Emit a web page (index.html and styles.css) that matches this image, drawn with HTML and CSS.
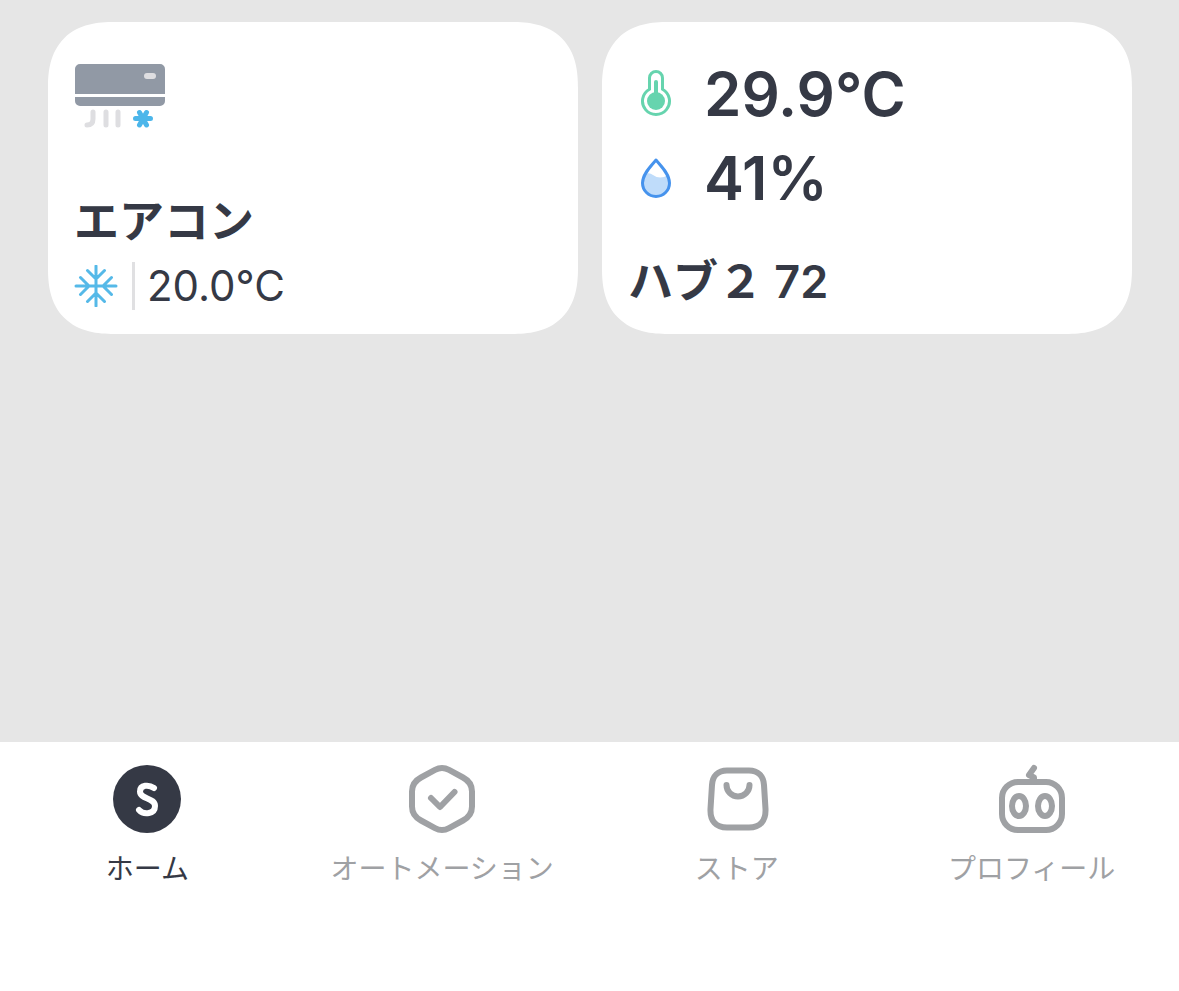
FILE: index.html
```html
<!DOCTYPE html>
<html lang="ja">
<head>
    <meta charset="UTF-8">
    <meta name="viewport" content="width=device-width, initial-scale=1">
    <title>ホーム</title>
    <link rel="stylesheet" href="styles.css">
</head>
<body>
    <main class="devices">
        <section class="card">
            <svg class="ac-icon" viewBox="0 0 92 66" aria-hidden="true">
                <path fill="#9199a5" d="M1 31V6a5 5 0 0 1 5-5h80a5 5 0 0 1 5 5v25zM1 34h90v4a5 5 0 0 1-5 5H6a5 5 0 0 1-5-5z"/>
                <rect x="70" y="10" width="12" height="6" rx="3" fill="#dedee1"/>
                <path fill="none" stroke="#dedee1" stroke-width="5" stroke-linecap="round" d="M19 49v7q0 6-6 6M32 49v13M44 49v13"/>
                <path fill="none" stroke="#4cb6ea" stroke-width="5" stroke-linecap="round" d="M61.500 55.500h15M65.500 49.500l7 12.500M72.500 49.500l-7 12.500"/>
            </svg>
            <h2 class="card-title">エアコン</h2>
            <div class="status">
                <svg class="snow-icon" viewBox="0 0 44 42" aria-hidden="true">
                    <path d="M22 1v40M2 21h40M13.500 5.500l8.500 8.500 8.500-8.500M13.500 36.500l8.500-8.500 8.500 8.500M6.500 12.500l8.500 8.500-8.500 8.500M37.500 12.500l-8.500 8.500 8.500 8.500"/>
                </svg>
                <span class="status-value">20.0°C</span>
            </div>
        </section>
        <section class="card">
            <div class="readings">
                <div class="reading">
                    <svg class="reading-icon" viewBox="0 0 32 48" aria-hidden="true">
                        <path fill="none" stroke="#66d4ae" stroke-width="3" d="M9.500 19.200V8a6.500 6.500 0 0 1 13 0v11.200a13.500 13.500 0 1 1-13 0z"/>
                        <circle cx="16" cy="31" r="9" fill="#66d4ae"/>
                        <path stroke="#66d4ae" stroke-width="4" stroke-linecap="round" d="M16 12v16"/>
                    </svg>
                    <span>29.9°C</span>
                </div>
                <div class="reading">
                    <svg class="reading-icon" viewBox="0 0 32 48" aria-hidden="true">
                        <path fill="#bfdcfa" d="M3 22q5-5 10-1 7 5 15 0l1 8a13 13 0 0 1-26 0z"/>
                        <path fill="none" stroke="#4693ed" stroke-width="3" stroke-linejoin="round" d="M16 6C11 12 2.500 20 2.500 29a13.500 13.500 0 0 0 27 0C29.500 20 21 12 16 6z"/>
                    </svg>
                    <span>41%</span>
                </div>
            </div>
            <h2 class="card-title">ハブ２ 72</h2>
        </section>
    </main>
    <nav class="tabs">
        <a class="tab active" href="#home">
            <svg class="tab-icon" viewBox="0 0 70 70" aria-hidden="true">
                <circle cx="35" cy="35" r="34" fill="#353945" stroke="none"/>
                <path stroke="#fff" d="M42 24C37 20.500 28 20.500 28 27.500c0 8 15 6 15 14.500 0 8-11 9.500-16 4"/>
            </svg>
            <span>ホーム</span>
        </a>
        <a class="tab" href="#automation">
            <svg class="tab-icon" viewBox="0 0 70 70" aria-hidden="true">
                <path d="M28 5.900q7-3.800 14 0l14 7.600q9 4.800 9 14v15q0 9.200-9 14l-14 7.600q-7 3.800-14 0l-14-7.600q-9-4.800-9-14v-15q0-9.200 9-14z"/>
                <path d="M24 34l9 9 14.500-15"/>
            </svg>
            <span>オートメーション</span>
        </a>
        <a class="tab" href="#store">
            <svg class="tab-icon" viewBox="0 0 70 70" aria-hidden="true">
                <path d="M25 6.500h22C56 6.500 61.500 12 62 21L63.500 45C64 57 58 63.500 47 63.500H25C14 63.500 8 57 8.500 45L10 21C10.500 12 16 6.500 25 6.500z"/>
                <path d="M24.500 21a11.500 11.500 0 0 0 23 0"/>
            </svg>
            <span>ストア</span>
        </a>
        <a class="tab" href="#profile">
            <svg class="tab-icon" viewBox="0 0 70 70" aria-hidden="true">
                <rect x="5" y="18" width="60" height="48" rx="16"/>
                <ellipse cx="22" cy="42" rx="7" ry="10"/>
                <ellipse cx="48" cy="42" rx="7" ry="10"/>
                <path d="M37 4l-5 7 5 2.500V18"/>
            </svg>
            <span>プロフィール</span>
        </a>
    </nav>
</body>
</html>
```
FILE: styles.css
```css
* {
    box-sizing: border-box;
}
body {
    margin: 0;
    min-height: 100vh;
    display: flex;
    flex-direction: column;
    background: #e6e6e6;
    color: #353945;
    font-family: Inter, "Noto Sans CJK JP", sans-serif;
}
.devices {
    flex: 1;
    display: grid;
    grid-template-columns: 1fr 1fr;
    align-items: start;
    gap: 24px;
    padding: 22px 47px 22px 48px;
}
.card {
    min-height: 312px;
    padding: 41px 26px 24px;
    display: flex;
    flex-direction: column;
    background: #fff;
    border-radius: 66px;
    corner-shape: superellipse(1.3);
}
.ac-icon {
    width: 92px;
    height: 66px;
}
.card-title {
    margin: auto 0 0;
    font-size: 45px;
    line-height: 56px;
    font-weight: 600;
}
.status {
    display: flex;
    align-items: center;
    margin-top: 12px;
}
.snow-icon {
    width: 44px;
    height: 42px;
    fill: none;
    stroke: #55b9e8;
    stroke-width: 3;
    stroke-linecap: round;
    stroke-linejoin: round;
}
.status-value {
    margin-left: 14px;
    padding-left: 12px;
    border-left: 3px solid #e0e0e2;
    font-size: 42px;
    line-height: 48px;
}
.readings {
    margin-top: -11px;
    padding-left: 12px;
}
.reading {
    display: flex;
    align-items: center;
    gap: 32px;
    font-size: 60px;
    line-height: 84px;
    font-weight: 600;
}
.reading-icon {
    width: 32px;
    height: 48px;
}
.tabs {
    display: grid;
    grid-template-columns: repeat(4, 1fr);
    padding: 22px 0 102px;
    background: #fff;
}
.tab {
    display: flex;
    flex-direction: column;
    align-items: center;
    gap: 15px;
    color: #9fa1a4;
    font-size: 28px;
    line-height: 40px;
    text-decoration: none;
}
.tab.active {
    color: #353945;
}
.tab-icon {
    width: 70px;
    height: 70px;
    fill: none;
    stroke: #9fa1a4;
    stroke-width: 6;
    stroke-linecap: round;
    stroke-linejoin: round;
}
```
